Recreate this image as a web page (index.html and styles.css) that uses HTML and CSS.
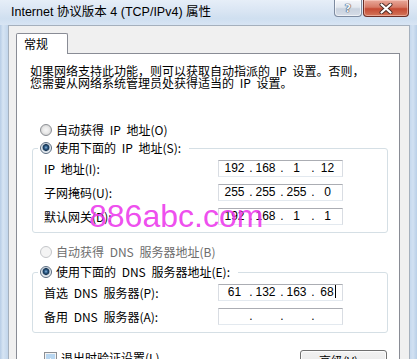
FILE: index.html
```html
<!DOCTYPE html>
<html lang="zh-CN">
<head>
<meta charset="utf-8">
<title>Internet 协议版本 4 (TCP/IPv4) 属性</title>
<link rel="stylesheet" href="styles.css">
</head>
<body>
<div class="window">
  <div class="titlebar">
    <div class="title">Internet 协议版本 4 (TCP/IPv4) 属性</div>
    <div class="caption-buttons">
      <div class="cbtn help"><span class="help-glyph">?</span></div>
      <div class="cbtn close">
        <svg width="14" height="11" viewBox="0 0 14 11">
          <path d="M2.5 1.5 L11.5 9.5 M11.5 1.5 L2.5 9.5" stroke="#4a2a24" stroke-width="4" stroke-linecap="round" fill="none"/>
          <path d="M2.5 1.5 L11.5 9.5 M11.5 1.5 L2.5 9.5" stroke="#ffffff" stroke-width="2.2" stroke-linecap="round" fill="none"/>
        </svg>
      </div>
    </div>
  </div>
  <div class="client">
    <div class="tabs"><div class="tab">常规</div></div>
    <div class="panel">
      <p class="intro">如果网络支持此功能，则可以获取自动指派的 IP 设置。否则，<br>您需要从网络系统管理员处获得适当的 IP 设置。</p>

      <div class="radio top-radio"><span class="rb"></span><span>自动获得 IP 地址(O)</span></div>

      <fieldset class="group first-group">
        <legend class="radio"><span class="rb checked"></span><span>使用下面的 IP 地址(S):</span></legend>
        <div class="rows">
          <div class="row">
            <span class="lbl">IP 地址(I):</span>
            <div class="ipbox"><span class="oct">192</span><span class="dot">.</span><span class="oct">168</span><span class="dot">.</span><span class="oct">1</span><span class="dot">.</span><span class="oct">12</span></div>
          </div>
          <div class="row">
            <span class="lbl">子网掩码(U):</span>
            <div class="ipbox"><span class="oct">255</span><span class="dot">.</span><span class="oct">255</span><span class="dot">.</span><span class="oct">255</span><span class="dot">.</span><span class="oct">0</span></div>
          </div>
          <div class="row">
            <span class="lbl">默认网关(D):</span>
            <div class="ipbox"><span class="oct">192</span><span class="dot">.</span><span class="oct">168</span><span class="dot">.</span><span class="oct">1</span><span class="dot">.</span><span class="oct">1</span></div>
          </div>
        </div>
      </fieldset>

      <div class="radio disabled dns-auto"><span class="rb"></span><span>自动获得 DNS 服务器地址(B)</span></div>

      <fieldset class="group second-group">
        <legend class="radio"><span class="rb checked"></span><span>使用下面的 DNS 服务器地址(E):</span></legend>
        <div class="rows">
          <div class="row">
            <span class="lbl">首选 DNS 服务器(P):</span>
            <div class="ipbox"><span class="oct">61</span><span class="dot">.</span><span class="oct">132</span><span class="dot">.</span><span class="oct">163</span><span class="dot">.</span><span class="oct">68<span class="caret"></span></span></div>
          </div>
          <div class="row">
            <span class="lbl">备用 DNS 服务器(A):</span>
            <div class="ipbox"><span class="oct"></span><span class="dot">.</span><span class="oct"></span><span class="dot">.</span><span class="oct"></span><span class="dot">.</span><span class="oct"></span></div>
          </div>
        </div>
      </fieldset>

      <div class="footer">
        <div class="check"><span class="cb"></span><span>退出时验证设置(L)</span></div>
        <div class="btn">高级(V)...</div>
      </div>
    </div>
  </div>
  <div class="watermark">886abc.com</div>
</div>
</body>
</html>
```

FILE: styles.css
```css
html, body {
  margin: 0;
  padding: 0;
}
body {
  width: 417px;
  height: 359px;
  overflow: hidden;
  background: linear-gradient(90deg, #b7cde6 0px, #d6e4f3 3px, #c2d6ec 8px, #c2d6ec 409px, #d2e1f2 413px, #b9cfe7 417px);
}
.window {
  position: relative;
  width: 417px;
  height: 359px;
}
.titlebar {
  height: 25px;
  display: flex;
  align-items: flex-start;
  padding: 0 8px 0 11px;
  background: linear-gradient(180deg, #e6eef8 0%, #d9e5f3 45%, #cfdff0 75%, #d8e5f4 100%);
}
.title {
  font-family: "Liberation Sans", "Noto Sans CJK SC", sans-serif;
  font-size: 12.5px;
  line-height: 25px;
  color: #000;
  white-space: nowrap;
}
.caption-buttons {
  margin-left: auto;
  display: flex;
  gap: 1px;
}
.cbtn {
  height: 17px;
  box-sizing: border-box;
  border-radius: 0 0 4px 4px;
  border-style: solid;
  border-width: 0 1px 1px 1px;
  display: flex;
  align-items: center;
  justify-content: center;
}
.help {
  width: 28px;
  border-color: #7d8ba0;
  background: linear-gradient(180deg, #f4f6fa 0%, #e3e8ef 45%, #c9d2de 55%, #d6dde7 100%);
  box-shadow: inset 0 0 0 1px rgba(255,255,255,0.6);
}
.help-glyph {
  font-family: "DejaVu Sans", sans-serif;
  font-size: 11px;
  font-weight: bold;
  line-height: 15px;
  color: #f4f6f9;
  text-shadow: 0 0 1px #3c4a5e, 0 0 1px #3c4a5e, 0 0 1px #3c4a5e;
}
.close {
  width: 46px;
  border-color: #6b2e26;
  background: linear-gradient(180deg, #e9a99b 0%, #d77a66 45%, #c54a33 55%, #d3765a 100%);
  box-shadow: inset 0 0 0 1px rgba(255,220,210,0.5);
}
.close svg {
  display: block;
}
.client {
  margin: 0 7px 0 8px;
  height: 334px;
  border: 1px solid #a5b0bd;
  border-bottom: 0;
  background: #f0f0f0;
  padding: 7px 9px 0 7px;
}
.tabs {
  display: flex;
  height: 20px;
}
.tab {
  position: relative;
  z-index: 1;
  width: 52px;
  height: 21px;
  box-sizing: border-box;
  border: 1px solid #898c95;
  border-bottom: 0;
  border-radius: 2px 2px 0 0;
  background: #ffffff;
  padding-left: 7px;
  font-family: "Noto Sans CJK SC", sans-serif;
  font-size: 12px;
  line-height: 19px;
  color: #000;
}
.panel {
  border: 1px solid #898c95;
  background: #ffffff;
  padding: 0 11px 0 13px;
  height: 400px;
  font-family: "Noto Sans CJK SC", sans-serif;
  font-size: 12px;
  word-spacing: 3px;
  color: #000;
}
.intro {
  margin: 11px 0 0 0;
  line-height: 12px;
  white-space: nowrap;
}
.radio {
  display: flex;
  align-items: center;
  gap: 4px;
  height: 14px;
  line-height: 14px;
  white-space: nowrap;
}
.top-radio {
  margin: 34px 0 0 10px;
}
.dns-auto {
  margin: 12px 0 0 10px;
}
.radio.disabled {
  color: #6d6d6d;
}
.rb {
  width: 12px;
  height: 12px;
  box-sizing: border-box;
  border-radius: 50%;
  border: 1px solid #8c8f94;
  background: radial-gradient(circle at 50% 50%, #f6f6f6 0, #eaeaea 3px, #d8d8d8 5px);
  flex: none;
}
.rb.checked {
  border-color: #5a6c80;
  background: radial-gradient(circle at 50% 45%, #8fb8dc 0, #2f5f8c 1.5px, #15324f 3px, #9fb1c2 3.6px, #e9edf1 4.4px);
}
.disabled .rb {
  border-color: #c4c6c9;
  background: #f4f4f4;
}
.group {
  margin: 0 0 0 2px;
  padding: 5px 0 7px 5px;
  border: 1px solid #d5dfe5;
  border-radius: 3px;
  min-width: 0;
}
.first-group {
  margin-top: 4px;
}
.second-group {
  margin-top: 6px;
}
.group legend {
  padding: 0 8px 0 2px;
}
.rows {
  display: flex;
  flex-direction: column;
  gap: 7px;
  padding-left: 6px;
}
.row {
  display: flex;
  align-items: center;
  height: 17px;
}
.lbl {
  width: 174px;
  flex: none;
  white-space: nowrap;
  line-height: 14px;
}
.ipbox {
  width: 125px;
  height: 17px;
  box-sizing: border-box;
  border: 1px solid;
  border-color: #abadb3 #d9dde3 #e3e9ef #d9dde3;
  background: #fff;
  display: flex;
  align-items: center;
  padding-left: 3px;
  font-family: "Liberation Sans", sans-serif;
  font-size: 12px;
  line-height: 15px;
  word-spacing: 0;
  color: #000;
}
.oct {
  width: 27px;
  box-sizing: border-box;
  padding-right: 2px;
  text-align: center;
  flex: none;
}
.dot {
  width: 4px;
  text-align: center;
  flex: none;
}
.caret {
  display: inline-block;
  width: 1px;
  height: 13px;
  background: #000;
  vertical-align: -2px;
  margin-right: -1px;
  margin-left: 1px;
}
.footer {
  margin-top: 17px;
  display: flex;
  justify-content: space-between;
  align-items: flex-start;
  padding: 0 1px 0 14px;
}
.check {
  display: flex;
  align-items: center;
  gap: 4px;
  height: 14px;
  line-height: 14px;
  margin-top: 1px;
  white-space: nowrap;
}
.cb {
  width: 13px;
  height: 13px;
  box-sizing: border-box;
  border: 1px solid #8c8f94;
  background: #f4f4f4;
  box-shadow: inset 0 0 0 1px #f4f4f4, inset 0 0 0 5px #b8d6f0;
  flex: none;
}
.btn {
  width: 87px;
  height: 23px;
  box-sizing: border-box;
  border: 1px solid #707070;
  border-radius: 3px;
  background: linear-gradient(180deg, #f2f2f2 0%, #ebebeb 50%, #dddddd 51%, #cfcfcf 100%);
  box-shadow: inset 0 0 0 1px #fcfcfc;
  text-align: center;
  line-height: 20px;
  white-space: nowrap;
}
.watermark {
  position: absolute;
  left: 89px;
  top: 200px;
  font-family: "Liberation Sans", sans-serif;
  font-size: 32px;
  line-height: 32px;
  color: rgba(236, 56, 236, 0.9);
  white-space: nowrap;
  pointer-events: none;
}
```
